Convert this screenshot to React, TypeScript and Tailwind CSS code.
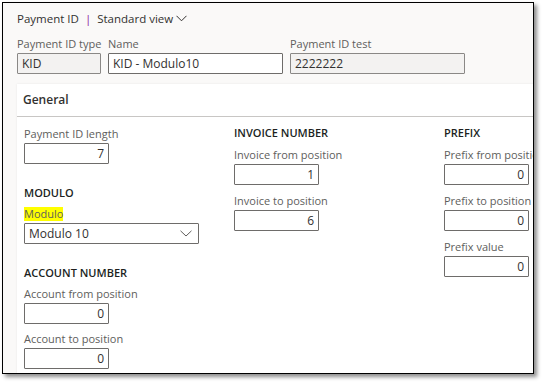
import React from 'react';

const font = { fontFamily: '"Open Sans", "Noto Sans", Arial, sans-serif' };

const Label: React.FC<{ children: React.ReactNode; className?: string }> = ({ children, className = '' }) => (
    <div className={`h-[18px] leading-[18px] text-[11px] text-[#605e5c] whitespace-nowrap ${className}`}>{children}</div>
);

const NumBox: React.FC<{ value: string }> = ({ value }) => (
    <div className="w-[85px] h-[21px] border border-[#6e6c6a] bg-white rounded-[1px] px-[4px] flex items-center justify-end text-[12px] text-[#323130]">
        {value}
    </div>
);

const Heading: React.FC<{ children: React.ReactNode; className?: string }> = ({ children, className = '' }) => (
    <div className={`h-[18px] leading-[18px] text-[11px] font-semibold text-[#201f1e] whitespace-nowrap ${className}`}>{children}</div>
);

const Field: React.FC<{ label: string; value: string; className?: string }> = ({ label, value, className = '' }) => (
    <div className={className}>
        <Label>{label}</Label>
        <NumBox value={value} />
    </div>
);

export default function App() {
    return (
        <div className="w-[543px] h-[384px] bg-white pt-[2px] pl-[2px]" style={font}>
            <div className="w-[532px] h-[372px] border border-black bg-[#faf9f8] overflow-hidden shadow-[3px_3px_4px_rgba(0,0,0,0.45)]">
                {/* title */}
                <div className="h-[28px] pl-[14px] pt-[3px] flex items-center gap-[6px] text-[11.5px] text-[#323130]">
                    <span>Payment ID</span>
                    <span className="text-[#8a2b9c]">|</span>
                    <span className="flex items-center gap-[3px]">
                        Standard view
                        <svg width="11" height="7" viewBox="0 0 11 7" fill="none" stroke="#323130" strokeWidth="1">
                            <path d="M0.5 0.8 L5.5 5.8 L10.5 0.8" />
                        </svg>
                    </span>
                </div>

                {/* header fields */}
                <div className="flex pl-[14px] mt-[4px] gap-[7px]">
                    <div className="w-[84px] shrink-0">
                        <Label>Payment ID type</Label>
                        <div className="w-[84px] h-[21px] border border-[#8a8886] bg-[#f3f2f1] rounded-[1px] px-[4px] flex items-center text-[12px] text-[#323130]">KID</div>
                    </div>
                    <div className="w-[175px] shrink-0">
                        <Label>Name</Label>
                        <div className="w-[175px] h-[21px] border border-[#6e6c6a] bg-white rounded-[1px] px-[4px] flex items-center text-[12px] text-[#323130]">KID - Modulo10</div>
                    </div>
                    <div className="w-[175px] shrink-0">
                        <Label>Payment ID test</Label>
                        <div className="w-[175px] h-[21px] border border-[#8a8886] bg-[#f3f2f1] rounded-[1px] px-[4px] flex items-center text-[12px] text-[#323130]">2222222</div>
                    </div>
                </div>

                {/* card */}
                <div className="ml-[14px] mt-[10px] w-[700px] h-[320px] bg-white shadow-[0_0_2px_rgba(0,0,0,0.08)]">
                    <div className="h-[33px] border-b border-[#c8c6c4] pl-[6px] flex items-center text-[12px] font-semibold text-[#323130]">
                        General
                    </div>
                    <div className="flex pl-[7px]">
                        <div className="w-[210px] shrink-0 pt-[8px]">
                            <Field label="Payment ID length" value="7" />
                            <Heading className="mt-[20px]">MODULO</Heading>
                            <div className="mt-[3px] h-[18px] flex items-center">
                                <span className="bg-[#ffff00] text-[11px] text-[#605e5c] leading-[14px]">Modulo</span>
                            </div>
                            <div className="w-[175px] h-[21px] border border-[#6e6c6a] bg-white rounded-[1px] pl-[4px] pr-[6px] flex items-center justify-between text-[12px] text-[#323130]">
                                <span>Modulo 10</span>
                                <svg width="12" height="7" viewBox="0 0 12 7" fill="none" stroke="#605e5c" strokeWidth="1">
                                    <path d="M0.5 0.8 L6 6 L11.5 0.8" />
                                </svg>
                            </div>
                            <Heading className="mt-[20px]">ACCOUNT NUMBER</Heading>
                            <Field label="Account from position" value="0" className="mt-[3px]" />
                            <Field label="Account to position" value="0" className="mt-[6px]" />
                        </div>
                        <div className="w-[210px] shrink-0 pt-[7px]">
                            <Heading>INVOICE NUMBER</Heading>
                            <Field label="Invoice from position" value="1" className="mt-[4px]" />
                            <Field label="Invoice to position" value="6" className="mt-[7px]" />
                        </div>
                        <div className="w-[210px] shrink-0 pt-[7px]">
                            <Heading>PREFIX</Heading>
                            <Field label="Prefix from position" value="0" className="mt-[4px]" />
                            <Field label="Prefix to position" value="0" className="mt-[7px]" />
                            <Field label="Prefix value" value="0" className="mt-[7px]" />
                        </div>
                    </div>
                </div>
            </div>
        </div>
    );
}
